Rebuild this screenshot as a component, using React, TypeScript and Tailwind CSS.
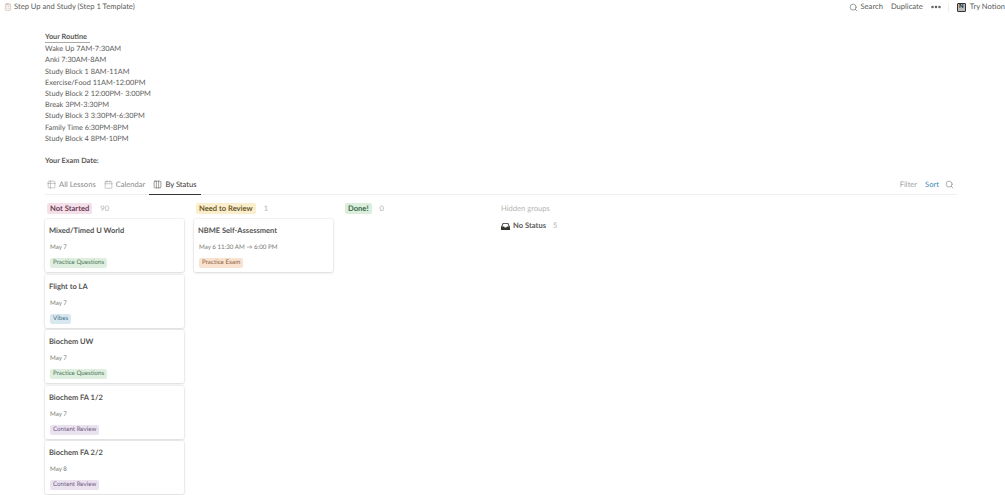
import { Search, MoreHorizontal, Table2, Calendar, Columns3, ClipboardList } from 'lucide-react';

const routine = [
  'Wake Up 7AM-7:30AM',
  'Anki 7:30AM-8AM',
  'Study Block 1 8AM-11AM',
  'Exercise/Food 11AM-12:00PM',
  'Study Block 2 12:00PM- 3:00PM',
  'Break 3PM-3:30PM',
  'Study Block 3 3:30PM-6:30PM',
  'Family Time 6:30PM-8PM',
  'Study Block 4 8PM-10PM',
];

const tagColors: Record<string, string> = {
  'Practice Questions': 'bg-[#dfefdf] text-[#4a7459]',
  Vibes: 'bg-[#d8e8f0] text-[#4a7089]',
  'Content Review': 'bg-[#ebe2f0] text-[#6b5a80]',
  'Practice Exam': 'bg-[#fae2d0] text-[#8a6040]',
};

const notStarted = [
  { title: 'Mixed/Timed U World', date: 'May 7', tag: 'Practice Questions' },
  { title: 'Flight to LA', date: 'May 7', tag: 'Vibes' },
  { title: 'Biochem UW', date: 'May 7', tag: 'Practice Questions' },
  { title: 'Biochem FA 1/2', date: 'May 7', tag: 'Content Review' },
  { title: 'Biochem FA 2/2', date: 'May 8', tag: 'Content Review' },
];

function Card({ title, date, tag }: { title: string; date: string; tag: string }) {
  return (
    <div className="h-[53px] w-[139px] rounded-[2px] bg-white pl-[4px] pt-[6px] shadow-[0_0_0_1px_rgba(15,15,15,0.04),0_1px_3px_rgba(15,15,15,0.12)]">
      <div className="text-[7.5px] leading-[11px] font-bold text-[#555553]">{title}</div>
      <div className="mt-[7px] pl-[1px] text-[6.2px] leading-[9px] text-[#777774]">{date}</div>
      <div className={`mt-[6px] ml-[1px] w-fit rounded-[2px] px-[3px] text-[6.2px] leading-[10px] ${tagColors[tag]}`}>
        {tag}
      </div>
    </div>
  );
}

function Header({ label, count, color }: { label: string; count: string; color: string }) {
  return (
    <div className="flex h-[11px] items-center pl-[2px]">
      <span className={`rounded-[2px] px-[3px] text-[7.6px] leading-[11px] font-bold ${color}`}>{label}</span>
      <span className="ml-[8px] text-[7.6px] text-[#b5b5b2]">{count}</span>
    </div>
  );
}

export default function App() {
  return (
    <div className="h-[495px] w-[1005px] overflow-hidden bg-white font-['Lato','Noto_Sans',sans-serif] text-[#5a5a58] [text-rendering:geometricPrecision]">
      {/* Top bar */}
      <div className="flex h-[14px] items-center justify-between pl-[4px] text-[7.6px] text-[#5a5a58]">
        <div className="flex items-center gap-[2px]">
          <ClipboardList size={8} strokeWidth={1.25} className="text-[#a98a7a]" />
          <span>Step Up and Study (Step 1 Template)</span>
        </div>
        <div className="flex items-center">
          <Search size={9} strokeWidth={1.5} />
          <span className="ml-[3px]">Search</span>
          <span className="ml-[8px]">Duplicate</span>
          <MoreHorizontal size={12} strokeWidth={3} className="ml-[7px]" />
          <div className="ml-[6px] h-[9px] w-px bg-[#eeeeec]" />
          <div className="ml-[8px] flex h-[9px] w-[9px] items-center justify-center rounded-[1px] border border-[#333] bg-[#bbb] text-[6px] font-bold leading-none text-[#222]">
            N
          </div>
          <span className="ml-[4px]">Try Notion</span>
        </div>
      </div>

      {/* Routine text */}
      <div className="pl-[45px] pt-[18px] text-[7.3px] leading-[11.2px]">
        <div className="w-[45px] whitespace-nowrap border-b border-[#55555380] font-bold leading-[10.2px]">Your Routine</div>
        {routine.map((line) => (
          <div key={line}>{line}</div>
        ))}
        <div className="mt-[11.2px] font-bold">Your Exam Date:</div>
      </div>

      {/* Tabs */}
      <div className="mt-[9px] ml-[45px] flex h-[20px] w-[912px] items-center justify-between border-b border-[#eeeeec] text-[7.6px]">
        <div className="flex h-full items-center">
          <div className="flex h-full items-center gap-[3px] pl-[2px] text-[#8a8a87]">
            <Table2 size={9} strokeWidth={1.25} />
            <span>All Lessons</span>
          </div>
          <div className="ml-[8px] flex h-full items-center gap-[3px] text-[#8a8a87]">
            <Calendar size={9} strokeWidth={1.25} />
            <span>Calendar</span>
          </div>
          <div className="ml-[4px] flex h-[20px] items-center gap-[3px] border-b-[1.5px] border-[#37352f] px-[4px] text-[#37352f]">
            <Columns3 size={9} strokeWidth={1.25} />
            <span>By Status</span>
          </div>
        </div>
        <div className="flex items-center pr-[3px]">
          <span className="text-[#a3a3a0]">Filter</span>
          <span className="ml-[8px] text-[#3f86b5]">Sort</span>
          <Search size={9} strokeWidth={1.5} className="ml-[6px] text-[#777]" />
        </div>
      </div>

      {/* Board */}
      <div className="ml-[45px] mt-[8px] flex items-start">
        <div className="flex w-[139px] flex-col">
          <Header label="Not Started" count="90" color="bg-[#f5e0e9] text-[#6b4058]" />
          <div className="mt-[5px] flex flex-col gap-[2.4px]">
            {notStarted.map((c) => (
              <Card key={c.title} {...c} />
            ))}
          </div>
        </div>
        <div className="ml-[10px] flex w-[139px] flex-col">
          <Header label="Need to Review" count="1" color="bg-[#fbeecc] text-[#6b5a2c]" />
          <div className="mt-[5px]">
            <Card title="NBME Self-Assessment" date="May 6 11:30 AM → 6:00 PM" tag="Practice Exam" />
          </div>
        </div>
        <div className="ml-[10px] w-[158px]">
          <Header label="Done!" count="0" color="bg-[#dbeddb] text-[#3c6b4f]" />
        </div>
        <div className="text-[7.6px]">
          <div className="h-[11px] leading-[11px] text-[#b5b5b2]">Hidden groups</div>
          <div className="mt-[6px] flex items-center">
            <svg width="9" height="9" viewBox="0 0 10 10" className="text-[#37352f]">
              <path fill="currentColor" d="M2 1h6l2 4.500V9H0V5.500L2 1Zm.7 1L1.300 5h2.200l.6 1.200h1.800L6.500 5h2.200L7.300 2H2.700Z" fillRule="evenodd" />
            </svg>
            <span className="ml-[3px] font-bold">No Status</span>
            <span className="ml-[7px] text-[#b5b5b2]">5</span>
          </div>
        </div>
      </div>
    </div>
  );
}
